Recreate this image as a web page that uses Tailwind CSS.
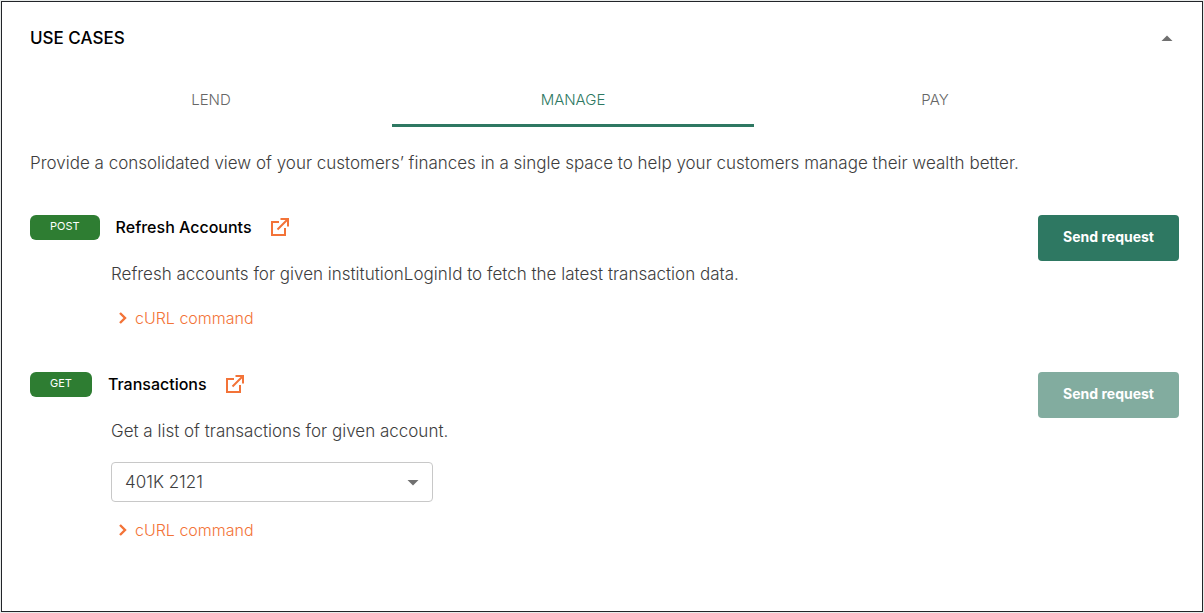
<!DOCTYPE html>
<html lang="en">
<head>
<meta charset="utf-8">
<meta name="viewport" content="width=device-width, initial-scale=1">
<title>Use cases</title>
<script src="https://cdn.jsdelivr.net/npm/@tailwindcss/browser@4"></script>
</head>
<body class="flex min-h-screen bg-[#e8ebea] p-px font-['Inter',sans-serif] text-base leading-6 text-[#3d3d3d]">
<main class="flex-1 border border-[#222529] bg-white pt-6 pr-[23px] pb-10 pl-7">
  <header class="flex items-center justify-between">
    <h1 class="text-[17px] font-medium text-black">USE CASES</h1>
    <button type="button" aria-label="Collapse use cases" aria-expanded="true" class="flex size-6 items-center justify-center">
      <svg class="size-6" viewBox="0 0 24 24" fill="#707070"><path d="M6.500 15L12 9.500l5.500 5.500z"/></svg>
    </button>
  </header>

  <div role="tablist" aria-label="Use cases" class="mt-6 mr-[63px] grid grid-cols-3 text-[15px] font-light">
    <button type="button" role="tab" aria-selected="false" class="h-[53px] border-b-3 border-transparent pt-0.5 text-[#666]">LEND</button>
    <button type="button" role="tab" aria-selected="true" class="h-[53px] border-b-3 border-[#2e7862] pt-0.5 text-[#2e7862]">MANAGE</button>
    <button type="button" role="tab" aria-selected="false" class="h-[53px] border-b-3 border-transparent pt-0.5 text-[#666]">PAY</button>
  </div>

  <p class="mt-6 text-[17px] font-light">Provide a consolidated view of your customers’ finances in a single space to help your customers manage their wealth better.</p>

  <section class="mt-10 flex items-start justify-between">
    <div>
      <div class="flex items-start">
        <span class="rounded-md bg-[#2e7d32] px-5 pt-[3px] pb-1.5 text-[11px] leading-4 text-white">POST</span>
        <h2 class="ml-4 font-medium text-black">Refresh Accounts</h2>
        <a href="#refresh-accounts" aria-label="Open Refresh Accounts reference" class="ml-4">
          <svg class="size-6" viewBox="0 0 24 24" fill="none" stroke="#f37338" stroke-width="2"><path d="M11 7H4v13h13v-7M9.500 14.500L19.500 4.500M12.500 4H20v7.500"/></svg>
        </a>
      </div>
      <div class="pl-[81px]">
        <p class="mt-[22px] text-[17px] font-light">Refresh accounts for given institutionLoginId to fetch the latest transaction data.</p>
        <button type="button" aria-expanded="false" class="mt-5 ml-1 flex items-center font-light text-[#f37338]">
          <svg class="mr-1 size-4" viewBox="0 0 16 16" fill="none" stroke="#f37338" stroke-width="2.400"><path d="M5 3l5 5-5 5"/></svg>
          cURL command
        </button>
      </div>
    </div>
    <button type="button" class="h-[46px] shrink-0 rounded bg-[#2e7862] px-[25px] pb-0.5 text-sm font-bold text-white">Send request</button>
  </section>

  <section class="mt-[42px] flex items-start justify-between">
    <div>
      <div class="flex items-start">
        <span class="rounded-md bg-[#2e7d32] px-5 pt-[3px] pb-1.5 text-[11px] leading-4 text-white">GET</span>
        <h2 class="ml-4 font-medium text-black">Transactions</h2>
        <a href="#transactions" aria-label="Open Transactions reference" class="ml-4">
          <svg class="size-6" viewBox="0 0 24 24" fill="none" stroke="#f37338" stroke-width="2"><path d="M11 7H4v13h13v-7M9.500 14.500L19.500 4.500M12.500 4H20v7.500"/></svg>
        </a>
      </div>
      <div class="pl-[81px]">
        <p class="mt-[22px] text-[17px] font-light">Get a list of transactions for given account.</p>
        <div class="mt-[19px] grid w-[322px] items-center">
          <select aria-label="Account" class="col-start-1 row-start-1 h-10 w-full appearance-none rounded border border-[#c8c8c8] bg-white px-[13px] text-[17px] font-light">
            <option>401K 2121</option>
          </select>
          <svg class="pointer-events-none col-start-1 row-start-1 mr-2 size-6 justify-self-end" viewBox="0 0 24 24" fill="#707070"><path d="M6.500 10l5.500 5.500 5.500-5.500z"/></svg>
        </div>
        <button type="button" aria-expanded="false" class="mt-4 ml-1 flex items-center font-light text-[#f37338]">
          <svg class="mr-1 size-4" viewBox="0 0 16 16" fill="none" stroke="#f37338" stroke-width="2.400"><path d="M5 3l5 5-5 5"/></svg>
          cURL command
        </button>
      </div>
    </div>
    <button type="button" disabled class="h-[46px] shrink-0 rounded bg-[#82ac9f] px-[25px] pb-0.5 text-sm font-bold text-white">Send request</button>
  </section>
</main>
</body>
</html>
